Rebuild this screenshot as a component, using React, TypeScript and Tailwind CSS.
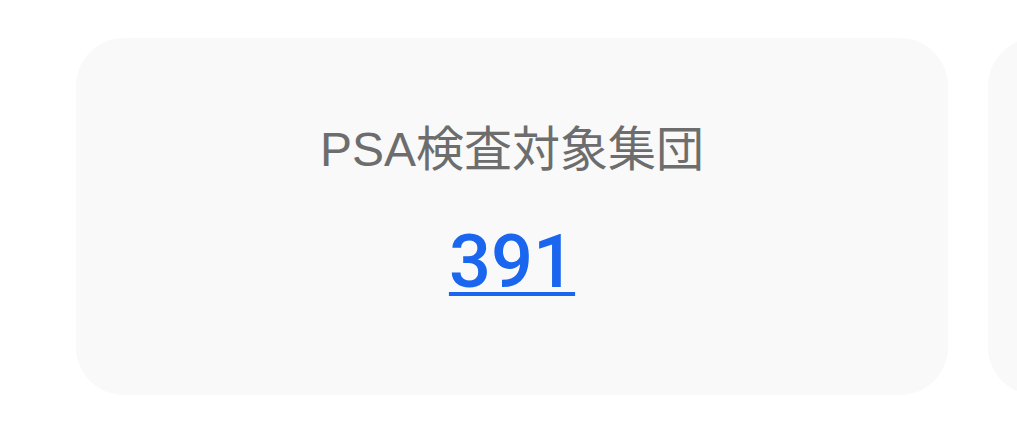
function StatCard({ label, value }: { label: string; value: number }) {
  return (
    <div className="flex h-[357px] w-[872px] shrink-0 flex-col items-center rounded-[48px] bg-[#f9f9f9] pt-[88px]">
      <div className="text-[48px] leading-none text-[#6d6d6d]">{label}</div>
      <a
        href="#"
        className="mt-[51px] font-['Roboto',sans-serif] text-[74px] font-medium leading-none text-[#1a66ee] underline decoration-[4px] underline-offset-[5px]"
      >
        {value}
      </a>
    </div>
  );
}

export default function App() {
  return (
    <div
      className="flex h-[424px] w-[1017px] gap-10 overflow-hidden bg-white pl-[76px] pt-[38px]"
      style={{ fontFamily: '"Liberation Sans", "Noto Sans CJK JP", sans-serif' }}
    >
      <StatCard label="PSA検査対象集団" value={391} />
      {/* next card, only its edge is on screen */}
      <div className="h-[357px] w-[872px] shrink-0 rounded-[48px] bg-[#f9f9f9]" />
    </div>
  );
}
